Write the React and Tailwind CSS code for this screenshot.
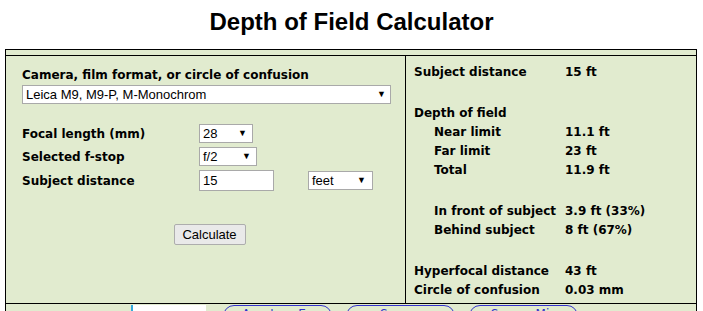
export default function App() {
  const label = "font-['DejaVu_Sans',Verdana,sans-serif] font-bold text-[12px] text-black";
  const field = "bg-white border border-[#a9a9a9] font-['Liberation_Sans',Arial,sans-serif] text-[13px] text-black h-[19px] flex items-center justify-between px-[3px]";

  const Arrow = () => <span className="text-[9px] leading-none">▼</span>;

  const Row = ({ name, value, indent }) => (
    <div className={`flex h-[19px] items-center ${label}`}>
      <span className={indent ? 'w-[151px] pl-[20px]' : 'w-[151px]'}>{name}</span>
      <span>{value}</span>
    </div>
  );

  return (
    <div className="w-[703px] h-[311px] overflow-hidden bg-white">
      <h1 className="text-center font-['Liberation_Sans',Arial,sans-serif] font-bold text-[24px] leading-none pt-[10px] h-[49px]">
        Depth of Field Calculator
      </h1>
      <div className="mx-[5px] w-[692px] border border-black bg-[#e1ebcf]">
        <div className="h-[6px] border-b border-black" />
        <div className="flex h-[248px] border-b border-black">
          <div className="w-[400px] border-r border-black pl-[16px] pt-[10px]">
            <div className={`${label} h-[17px] flex items-center`}>Camera, film format, or circle of confusion</div>
            <div className={`${field} w-[369px] mt-[2px] pr-[4px]`}>
              <span>Leica M9, M9-P, M-Monochrom</span>
              <Arrow />
            </div>
            <div className="mt-[20px] grid grid-cols-[177px_109px_auto] gap-y-[4px] items-center">
              <div className={label}>Focal length (mm)</div>
              <div className={`${field} w-[54px] pr-[5px]`}><span>28</span><Arrow /></div>
              <div />
              <div className={label}>Selected f-stop</div>
              <div className={`${field} w-[58px] pr-[5px]`}><span>f/2</span><Arrow /></div>
              <div />
              <div className={label}>Subject distance</div>
              <div className={`${field} w-[75px] h-[21px]`}><span>15</span></div>
              <div className={`${field} w-[65px] pr-[6px]`}><span>feet</span><Arrow /></div>
            </div>
            <div className="flex justify-center pr-[8px] mt-[33px]">
              <button className="h-[21px] w-[72px] border border-[#adadad] bg-[#e9e9e9] rounded-[2px] font-['Liberation_Sans',Arial,sans-serif] text-[13px] text-black">
                Calculate
              </button>
            </div>
          </div>
          <div className="flex-1 pl-[8px] pt-[6px]">
            <Row name="Subject distance" value="15 ft" />
            <div className="h-[22px]" />
            <Row name="Depth of field" />
            <Row name="Near limit" value="11.1 ft" indent />
            <Row name="Far limit" value="23 ft" indent />
            <Row name="Total" value="11.9 ft" indent />
            <div className="h-[22px]" />
            <Row name="In front of subject" value="3.9 ft (33%)" indent />
            <Row name="Behind subject" value="8 ft (67%)" indent />
            <div className="h-[22px]" />
            <Row name="Hyperfocal distance" value="43 ft" />
            <Row name="Circle of confusion" value="0.03 mm" />
          </div>
        </div>
        <div className="flex items-start h-[30px] pt-[1px] pl-[125px] gap-[14px] font-['DejaVu_Sans',Verdana,sans-serif] text-[12px] leading-[16px] text-[#3333cc]">
          <div className="w-[75px] h-[20px] mr-[3px] bg-white border-l-2 border-[#33aadd]" />
          <div className="w-[109px] h-[22px] rounded-full border border-[#3333cc] bg-[#e1ebcf] text-center">Aperture Ex</div>
          <div className="w-[109px] h-[22px] rounded-full border border-[#3333cc] bg-[#e1ebcf] text-center">Sensor</div>
          <div className="w-[109px] h-[22px] rounded-full border border-[#3333cc] bg-[#e1ebcf] text-center">Sensor Mix</div>
        </div>
      </div>
    </div>
  );
}
